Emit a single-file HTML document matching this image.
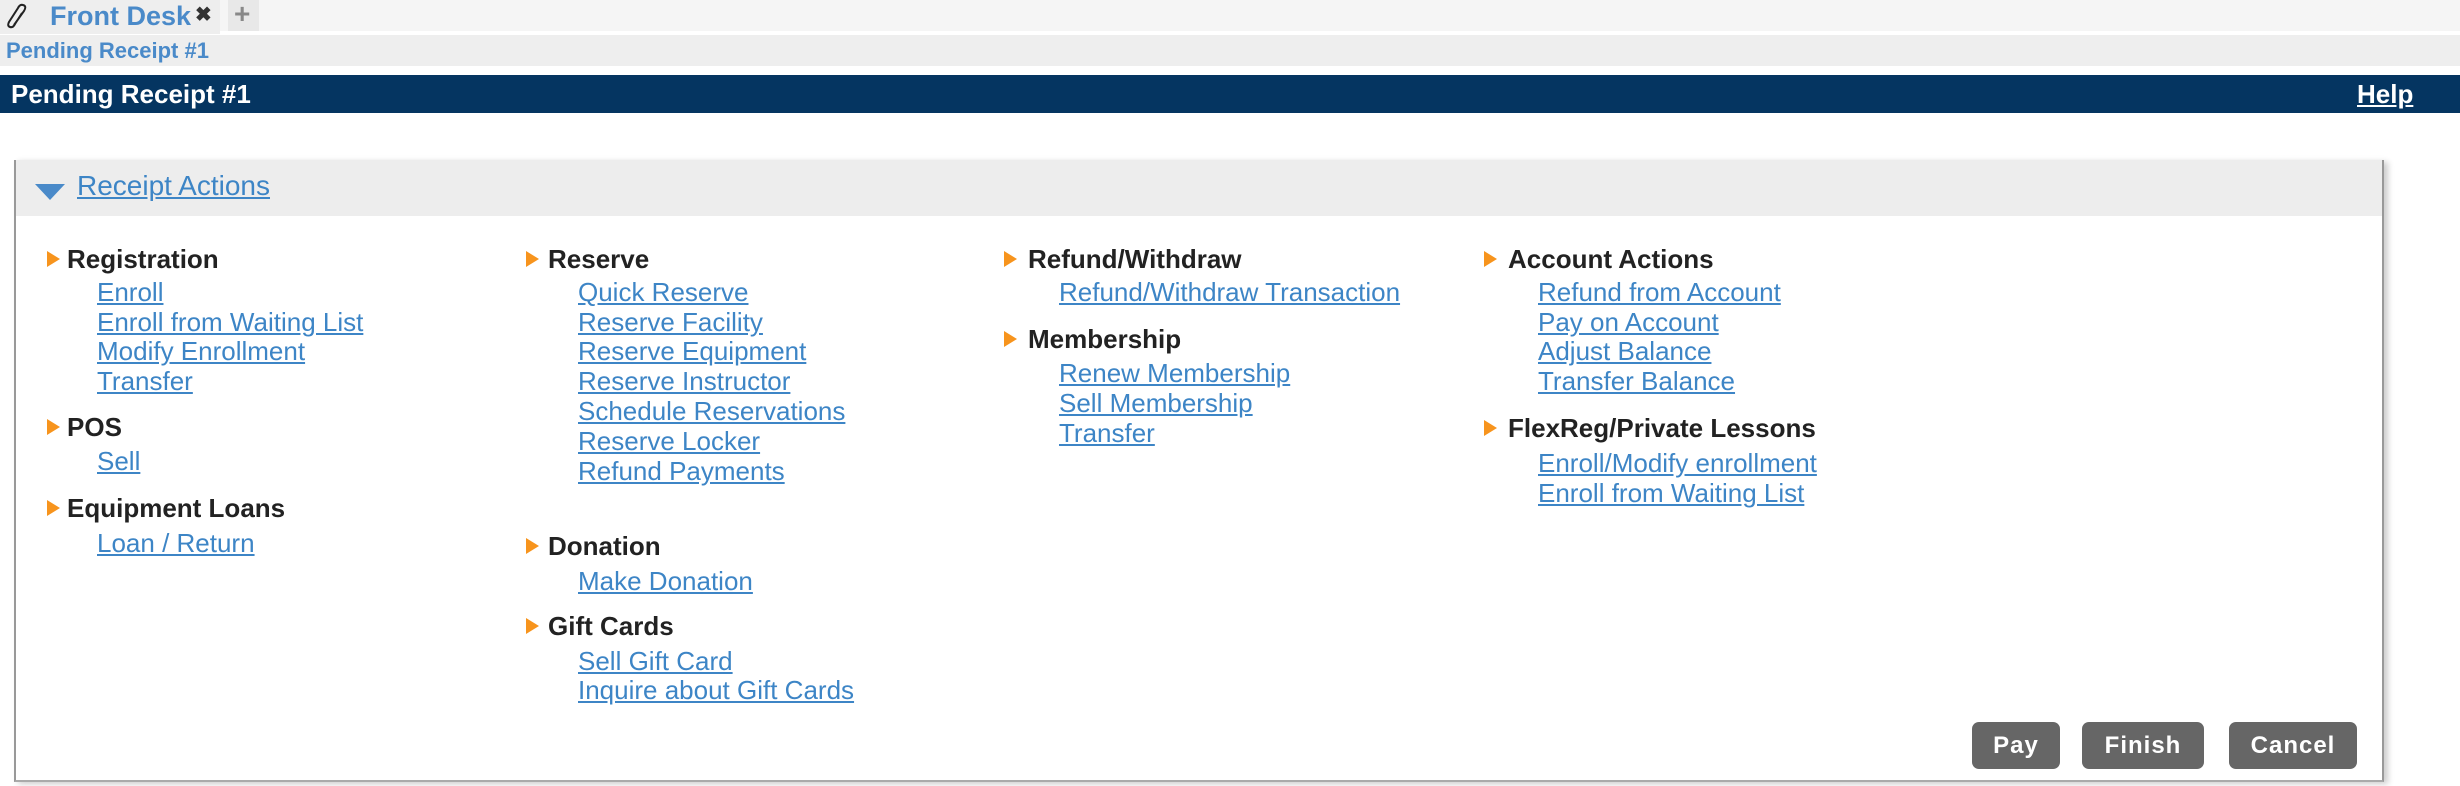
<!DOCTYPE html>
<html><head><meta charset="utf-8"><style>
*{margin:0;padding:0;box-sizing:border-box}
body{width:2460px;height:786px;background:#fff;font-family:"Liberation Sans",Arial,sans-serif;position:relative;overflow:hidden}
.a{position:absolute;white-space:nowrap;line-height:26px}
.h{font-weight:bold;font-size:26px;color:#222}
.l{font-size:26px;color:#3d85c6;text-decoration:underline}
.t{position:absolute;width:0;height:0;border-top:8px solid transparent;border-bottom:8px solid transparent;border-left:13px solid #f7941d}
.btn{position:absolute;top:722px;height:47px;background:#666;border-radius:7px;color:#fff;font-size:24px;font-weight:bold;text-align:center;line-height:47px;letter-spacing:1px}
</style></head><body>
<div style="position:absolute;left:0;top:0;width:2460px;height:31px;background:#f5f5f5"></div>
<div style="position:absolute;left:0;top:0;width:220px;height:34px;background:#eee"></div>
<div style="position:absolute;left:228px;top:0;width:31px;height:31px;background:#e8e8e8"></div>
<svg style="position:absolute;left:6px;top:3px" width="22" height="26" viewBox="0 0 22 26"><path d="M8 22 L18 8 Q21 3 17 2 Q14 1 12 5 L3 19 Q1 23 4 24 Q7 25 9 21 L16 10" fill="none" stroke="#222" stroke-width="2"/></svg>
<div class="a" style="left:50px;top:3px;font-size:27px;font-weight:bold;color:#4a8ac9">Front Desk</div>
<div class="a" style="left:195px;top:2px;font-size:20px;font-weight:bold;color:#333">✖</div>
<div class="a" style="left:234px;top:1px;font-size:28px;font-weight:bold;color:#888">+</div>
<div style="position:absolute;left:0;top:35px;width:2460px;height:31px;background:#eee"></div>
<div class="a" style="left:6px;top:38px;font-size:22px;font-weight:bold;color:#4a8ac9">Pending Receipt #1</div>
<div style="position:absolute;left:0;top:75px;width:2460px;height:38px;background:#053561"></div>
<div class="a" style="left:11px;top:81px;font-size:26px;font-weight:bold;color:#fff">Pending Receipt #1</div>
<div class="a" style="left:2357px;top:81px;font-size:26px;font-weight:bold;color:#fff;text-decoration:underline">Help</div>

<div style="position:absolute;left:14px;top:160px;width:2370px;height:622px;background:#fff;border-left:2px solid #999;border-right:2px solid #999;border-bottom:2px solid #aaa;box-shadow:4px 2px 6px rgba(0,0,0,0.2)"></div>
<div style="position:absolute;left:16px;top:160px;width:2366px;height:56px;background:#ededed"></div>
<div style="position:absolute;left:35px;top:184px;width:0;height:0;border-left:15px solid transparent;border-right:15px solid transparent;border-top:16px solid #4a8ac9"></div>
<div class="a" style="left:77px;top:173px;font-size:28px;color:#3d85c6;text-decoration:underline">Receipt Actions</div>

<div class="t" style="left:47px;top:251px"></div><div class="a h" style="left:67px;top:246px">Registration</div>
<div class="a l" style="left:97px;top:279px">Enroll</div>
<div class="a l" style="left:97px;top:309px">Enroll from Waiting List</div>
<div class="a l" style="left:97px;top:338px">Modify Enrollment</div>
<div class="a l" style="left:97px;top:368px">Transfer</div>
<div class="t" style="left:47px;top:419px"></div><div class="a h" style="left:67px;top:414px">POS</div>
<div class="a l" style="left:97px;top:448px">Sell</div>
<div class="t" style="left:47px;top:500px"></div><div class="a h" style="left:67px;top:495px">Equipment Loans</div>
<div class="a l" style="left:97px;top:530px">Loan / Return</div>

<div class="t" style="left:526px;top:251px"></div><div class="a h" style="left:548px;top:246px">Reserve</div>
<div class="a l" style="left:578px;top:279px">Quick Reserve</div>
<div class="a l" style="left:578px;top:309px">Reserve Facility</div>
<div class="a l" style="left:578px;top:338px">Reserve Equipment</div>
<div class="a l" style="left:578px;top:368px">Reserve Instructor</div>
<div class="a l" style="left:578px;top:398px">Schedule Reservations</div>
<div class="a l" style="left:578px;top:428px">Reserve Locker</div>
<div class="a l" style="left:578px;top:458px">Refund Payments</div>
<div class="t" style="left:526px;top:538px"></div><div class="a h" style="left:548px;top:533px">Donation</div>
<div class="a l" style="left:578px;top:568px">Make Donation</div>
<div class="t" style="left:526px;top:618px"></div><div class="a h" style="left:548px;top:613px">Gift Cards</div>
<div class="a l" style="left:578px;top:648px">Sell Gift Card</div>
<div class="a l" style="left:578px;top:677px">Inquire about Gift Cards</div>

<div class="t" style="left:1004px;top:251px"></div><div class="a h" style="left:1028px;top:246px">Refund/Withdraw</div>
<div class="a l" style="left:1059px;top:279px">Refund/Withdraw Transaction</div>
<div class="t" style="left:1004px;top:331px"></div><div class="a h" style="left:1028px;top:326px">Membership</div>
<div class="a l" style="left:1059px;top:360px">Renew Membership</div>
<div class="a l" style="left:1059px;top:390px">Sell Membership</div>
<div class="a l" style="left:1059px;top:420px">Transfer</div>

<div class="t" style="left:1484px;top:251px"></div><div class="a h" style="left:1508px;top:246px">Account Actions</div>
<div class="a l" style="left:1538px;top:279px">Refund from Account</div>
<div class="a l" style="left:1538px;top:309px">Pay on Account</div>
<div class="a l" style="left:1538px;top:338px">Adjust Balance</div>
<div class="a l" style="left:1538px;top:368px">Transfer Balance</div>
<div class="t" style="left:1484px;top:420px"></div><div class="a h" style="left:1508px;top:415px">FlexReg/Private Lessons</div>
<div class="a l" style="left:1538px;top:450px">Enroll/Modify enrollment</div>
<div class="a l" style="left:1538px;top:480px">Enroll from Waiting List</div>

<div class="btn" style="left:1972px;width:88px">Pay</div>
<div class="btn" style="left:2082px;width:122px">Finish</div>
<div class="btn" style="left:2229px;width:128px">Cancel</div>
</body></html>
